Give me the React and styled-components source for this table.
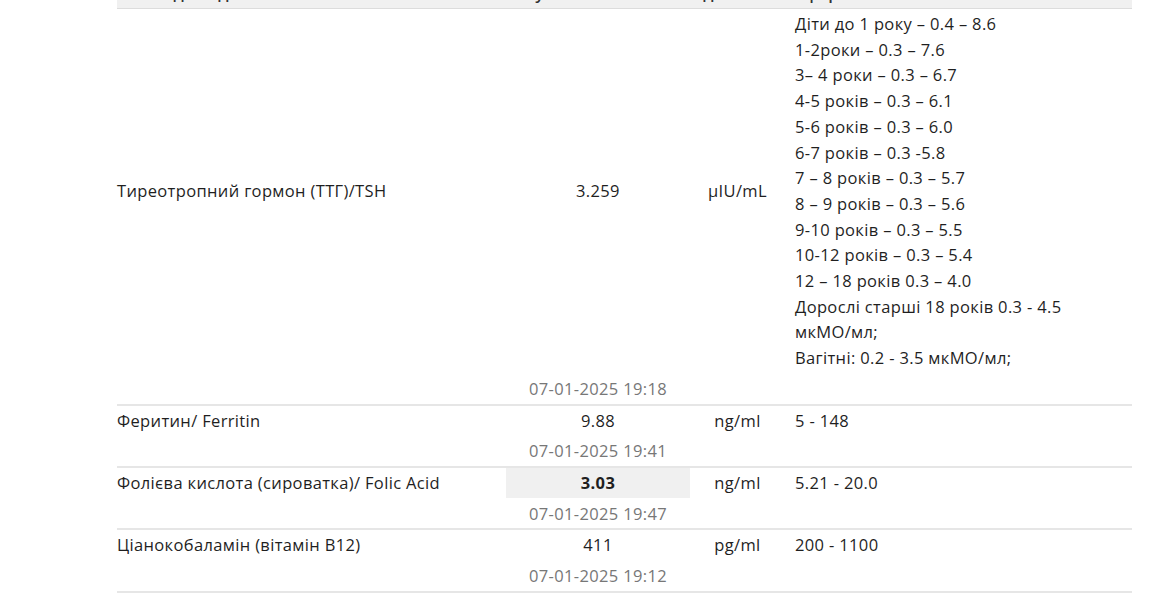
import React from 'react';
import styled, { createGlobalStyle } from 'styled-components';

const GlobalStyle = createGlobalStyle`
    html, body {
        margin: 0;
        padding: 0;
        background: #ffffff;
    }

    body {
        font-family: "Open Sans", "Noto Sans", sans-serif;
        color: #1f1f1f;
    }
`;

const Page = styled.div`
    width: 1164px;
    height: 600px;
    overflow: hidden;
`;

const Table = styled.table`
    margin-left: 117px;
    margin-top: -22px;
    width: 1015px;
    border-collapse: collapse;
    table-layout: fixed;
    font-size: 16.5px;
    letter-spacing: 0.35px;
    line-height: 25.7px;

    col.name { width: 389px; }
    col.value { width: 184px; }
    col.unit { width: 95px; }
`;

const HeadRow = styled.tr`
    background: #f0f0f0;
    border-bottom: 1px solid #dcdcdc;

    th {
        height: 30px;
        padding: 0 10px 0 0;
        font-weight: 600;
        text-align: left;
        color: #333;
        vertical-align: middle;
    }
`;

const MainRow = styled.tr`
    border-top: ${({ $first }) => ($first ? 'none' : '2px solid #e6e6e6')};
`;

const Cell = styled.td`
    padding: ${({ $pad }) => $pad || '2px 10px 2px 0'};
    vertical-align: ${({ $top }) => ($top ? 'top' : 'middle')};
    text-align: ${({ $align }) => $align || 'left'};
    white-space: nowrap;
`;

const ValueCell = styled.td`
    padding: 2px 0;
    text-align: center;
    vertical-align: middle;
    font-weight: ${({ $flag }) => ($flag ? 700 : 400)};
    background: ${({ $flag }) => ($flag ? '#f0f0f0' : 'transparent')};
`;

const DateCell = styled.td`
    padding: 3px 0 2px;
    text-align: center;
    color: #777;
`;

const RangeLine = styled.div`
    white-space: nowrap;
`;

const tests = [
  {
    name: 'Тиреотропний гормон (ТТГ)/TSH',
    value: '3.259',
    unit: 'µIU/mL',
    range: [
      'Діти до 1 року – 0.4 – 8.6',
      '1-2роки – 0.3 – 7.6',
      '3– 4 роки – 0.3 – 6.7',
      '4-5 років – 0.3 – 6.1',
      '5-6 років – 0.3 – 6.0',
      '6-7 років – 0.3 -5.8',
      '7 – 8 років – 0.3 – 5.7',
      '8 – 9 років – 0.3 – 5.6',
      '9-10 років – 0.3 – 5.5',
      '10-12 років – 0.3 – 5.4',
      '12 – 18 років 0.3 – 4.0',
      'Дорослі старші 18 років 0.3 - 4.5',
      'мкМО/мл;',
      'Вагітні: 0.2 - 3.5 мкМО/мл;',
    ],
    date: '07-01-2025 19:18',
  },
  { name: 'Феритин/ Ferritin', value: '9.88', unit: 'ng/ml', range: ['5 - 148'], date: '07-01-2025 19:41' },
  {
    name: 'Фолієва кислота (сироватка)/ Folic Acid',
    value: '3.03',
    unit: 'ng/ml',
    range: ['5.21 - 20.0'],
    date: '07-01-2025 19:47',
    flag: true,
  },
  { name: 'Ціанокобаламін (вітамін B12)', value: '411', unit: 'pg/ml', range: ['200 - 1100'], date: '07-01-2025 19:12' },
];

const App = () => (
  <Page>
    <GlobalStyle />
    <Table>
      <colgroup>
        <col className="name" />
        <col className="value" />
        <col className="unit" />
        <col />
      </colgroup>
      <thead>
        <HeadRow>
          <th>Назва дослідження</th>
          <th>Результат</th>
          <th>Од.</th>
          <th>Референтні значення</th>
        </HeadRow>
      </thead>
      <tbody>
        {tests.map((t, i) => (
          <React.Fragment key={t.name}>
            <MainRow $first={i === 0}>
              <Cell>{t.name}</Cell>
              <ValueCell $flag={t.flag}>{t.value}</ValueCell>
              <Cell $align="center" $pad="2px 0">{t.unit}</Cell>
              <Cell $top $pad="2px 0 2px 10px">
                {t.range.map((line) => (
                  <RangeLine key={line}>{line}</RangeLine>
                ))}
              </Cell>
            </MainRow>
            <tr>
              <td />
              <DateCell>{t.date}</DateCell>
              <td />
              <td />
            </tr>
          </React.Fragment>
        ))}
        <MainRow>
          <td colSpan={4} />
        </MainRow>
      </tbody>
    </Table>
  </Page>
);

export default App;
